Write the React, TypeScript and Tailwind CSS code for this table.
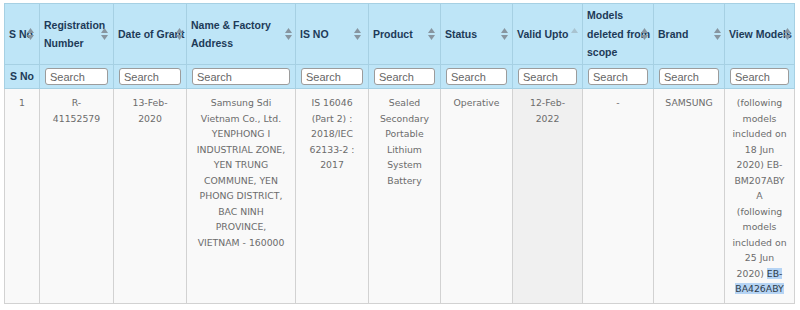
import React from "react";

type Col = {
  key: string;
  title: string[];
  width: number;
  icon: "both" | "up";
  iconRight: number;
};

const cols: Col[] = [
  { key: "sno", title: ["S No"], width: 35, icon: "both", iconRight: 5 },
  { key: "reg", title: ["Registration", "Number"], width: 74, icon: "both", iconRight: 5 },
  { key: "date", title: ["Date of Grant"], width: 73, icon: "both", iconRight: 3 },
  { key: "name", title: ["Name & Factory", "Address"], width: 109, icon: "both", iconRight: 3 },
  { key: "is", title: ["IS NO"], width: 73, icon: "both", iconRight: 7 },
  { key: "product", title: ["Product"], width: 72, icon: "both", iconRight: 5 },
  { key: "status", title: ["Status"], width: 72, icon: "both", iconRight: 4 },
  { key: "valid", title: ["Valid Upto"], width: 70, icon: "up", iconRight: 4 },
  { key: "models", title: ["Models", "deleted from", "scope"], width: 71, icon: "both", iconRight: 5 },
  { key: "brand", title: ["Brand"], width: 71, icon: "both", iconRight: 3 },
  { key: "view", title: ["View Models"], width: 70, icon: "both", iconRight: 3 },
];

const body: string[][] = [
  ["1"],
  ["R-", "41152579"],
  ["13-Feb-", "2020"],
  [
    "Samsung Sdi",
    "Vietnam Co., Ltd.",
    "YENPHONG I",
    "INDUSTRIAL ZONE,",
    "YEN TRUNG",
    "COMMUNE, YEN",
    "PHONG DISTRICT,",
    "BAC NINH",
    "PROVINCE,",
    "VIETNAM - 160000",
  ],
  ["IS 16046", "(Part 2) :", "2018/IEC", "62133-2 :", "2017"],
  ["Sealed", "Secondary", "Portable", "Lithium", "System", "Battery"],
  ["Operative"],
  ["12-Feb-", "2022"],
  ["-"],
  ["SAMSUNG"],
];

const viewModels = [
  "(following",
  "models",
  "included on",
  "18 Jun",
  "2020) EB-",
  "BM207ABY",
  "A",
  "(following",
  "models",
  "included on",
  "25 Jun",
];

function SortIcon({ kind }: { kind: "both" | "up" }) {
  return (
    <svg width="7" height="12" viewBox="0 0 7 12">
      <polygon
        points="0,5 3.5,0 7,5"
        fill={kind === "up" ? "#a9c3d0" : "#8795a0"}
      />
      {kind === "both" && <polygon points="0,7 3.5,12 7,7" fill="#8795a0" />}
    </svg>
  );
}

export default function App() {
  return (
    <div className="w-[800px] h-[310px] bg-white pl-[4px] pt-[3px] overflow-hidden">
      <table className="table-fixed border-collapse w-[790px]">
        <colgroup>
          {cols.map((c) => (
            <col key={c.key} style={{ width: c.width }} />
          ))}
        </colgroup>
        <thead>
          {/* Titles */}
          <tr className="h-[61px] bg-[#bee5f7]">
            {cols.map((c) => (
              <th
                key={c.key}
                className="relative border border-[#a6d0e3] pl-[4px] pr-[2px] text-left align-middle font-['Liberation_Sans',Arial,sans-serif] text-[10.5px] leading-[18.5px] font-bold text-[#1d3a58] whitespace-nowrap"
              >
                {c.title.map((t, i) => (
                  <div key={i}>{t}</div>
                ))}
                <span
                  className="absolute top-1/2 -translate-y-1/2 flex"
                  style={{ right: c.iconRight }}
                >
                  <SortIcon kind={c.icon} />
                </span>
              </th>
            ))}
          </tr>

          {/* Search row */}
          <tr className="h-[24px] bg-[#bee5f7]">
            <th className="border border-[#a6d0e3] pl-[5px] text-left font-['Liberation_Sans',Arial,sans-serif] text-[10.5px] font-bold text-[#1d3a58]">
              S No
            </th>
            {cols.slice(1).map((c) => (
              <th key={c.key} className="border border-[#a6d0e3] px-[5px]">
                <input
                  readOnly
                  placeholder="Search"
                  className="block w-full h-[17px] rounded-[3px] border border-[#9c9c9c] bg-white px-[4px] font-['Liberation_Sans',Arial,sans-serif] text-[11px] font-normal text-[#555] placeholder:text-[#666] outline-none"
                />
              </th>
            ))}
          </tr>
        </thead>
        <tbody>
          <tr className="h-[215px]">
            {body.map((lines, i) => (
              <td
                key={i}
                className={`border border-[#d2d2d2] px-[3px] pt-[6px] align-top text-center font-['DejaVu_Sans',Verdana,sans-serif] text-[9.3px] leading-[15.5px] text-[#6c6c6c] whitespace-nowrap ${
                  i === 7 ? "bg-[#f0f0f0]" : "bg-[#f9f9f9]"
                }`}
              >
                {lines.map((l, j) => (
                  <div key={j}>{l}</div>
                ))}
              </td>
            ))}
            <td className="border border-[#d2d2d2] px-[3px] pt-[6px] align-top text-center font-['DejaVu_Sans',Verdana,sans-serif] text-[9.3px] leading-[15.5px] text-[#6c6c6c] whitespace-nowrap bg-[#f9f9f9]">
              {viewModels.map((l, j) => (
                <div key={j}>{l}</div>
              ))}
              <div>
                2020) <span className="bg-[#b6d4f4] text-[#2c3a48]">EB-</span>
              </div>
              <div>
                <span className="bg-[#b6d4f4] text-[#2c3a48]">BA426ABY</span>
              </div>
            </td>
          </tr>
        </tbody>
      </table>
    </div>
  );
}
